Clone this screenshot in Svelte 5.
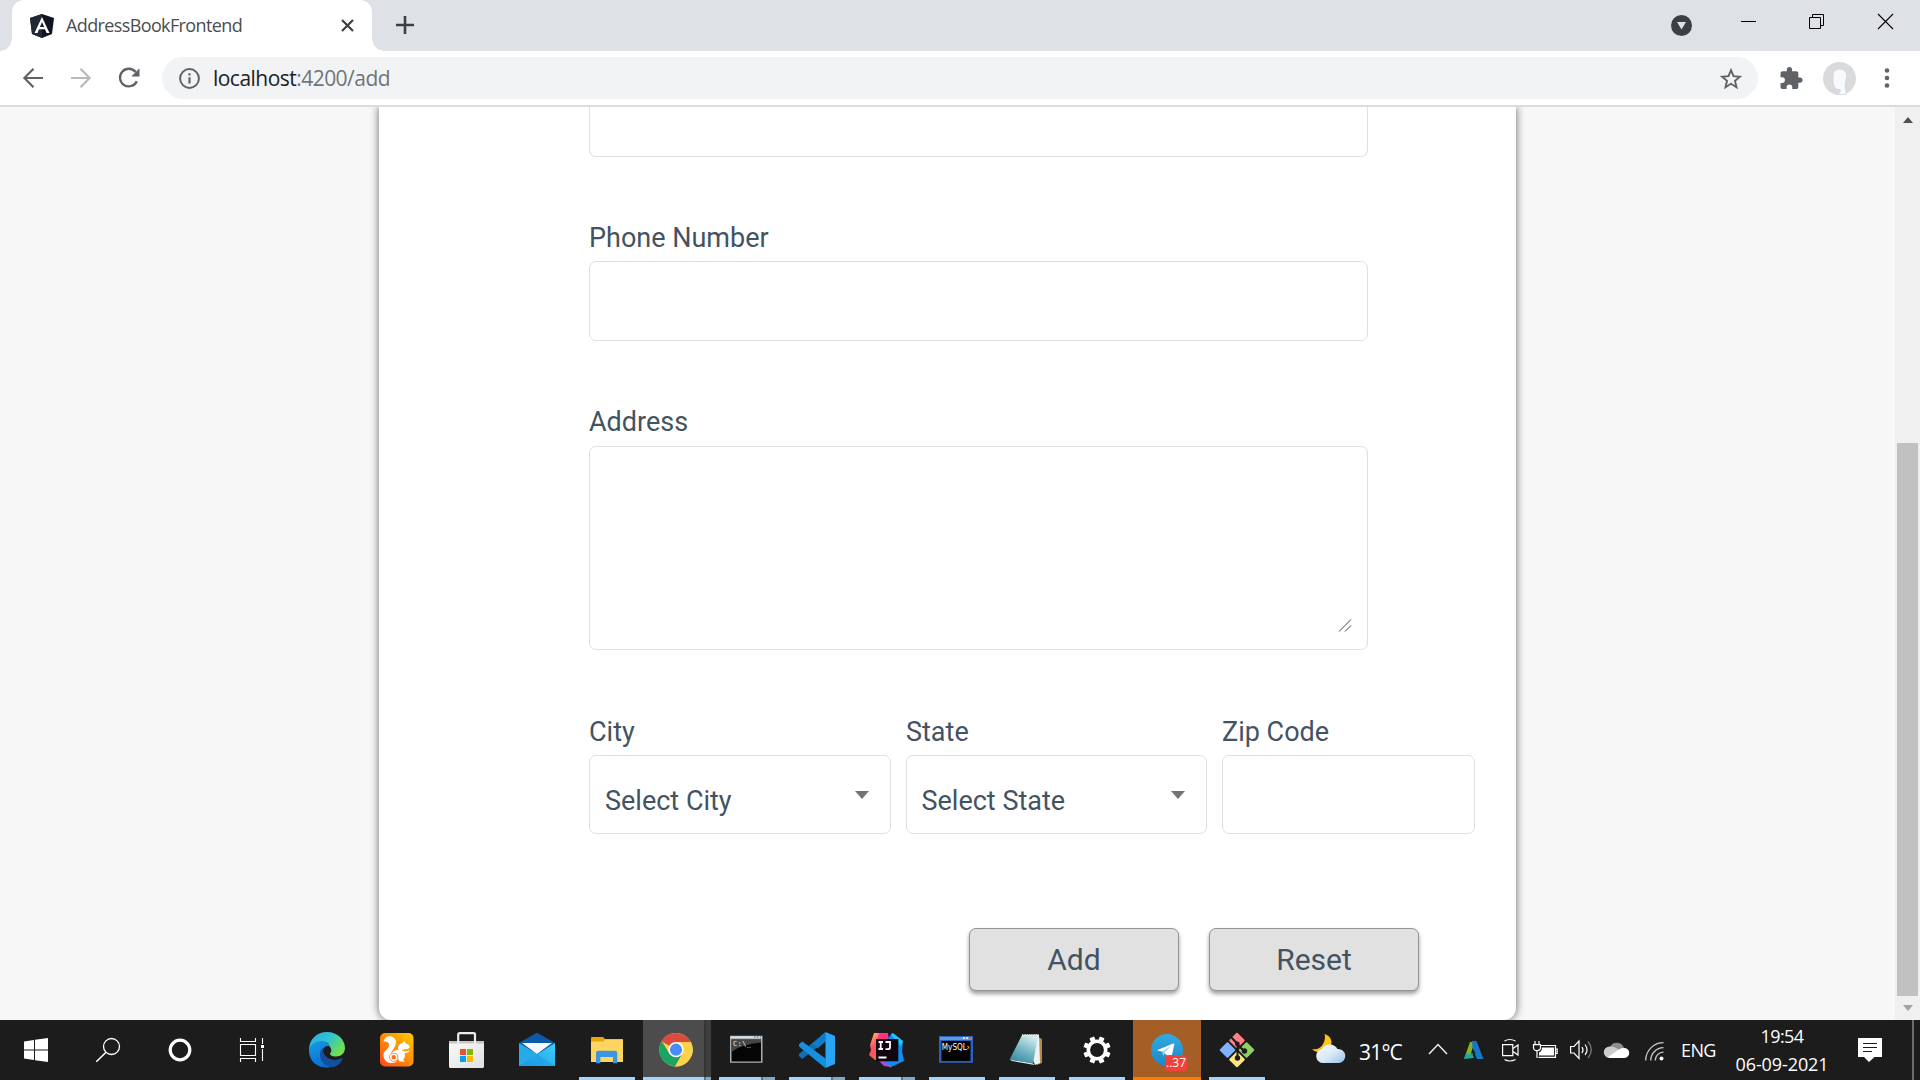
<script lang="ts">
  // Pinned and running taskbar programs; `wins` is the number of stacked windows (0 = not running).
  const apps = [
    { id: 'edge', wins: 0 },
    { id: 'uc', wins: 0 },
    { id: 'store', wins: 0 },
    { id: 'mail', wins: 0 },
    { id: 'files', wins: 1 },
    { id: 'chrome', wins: 2, state: 'active' },
    { id: 'cmd', wins: 2 },
    { id: 'vscode', wins: 2 },
    { id: 'idea', wins: 2 },
    { id: 'mysql', wins: 1 },
    { id: 'notepad', wins: 1 },
    { id: 'gear', wins: 1 },
    { id: 'telegram', wins: 1, state: 'alert' },
    { id: 'git', wins: 1 },
  ];
  const teeth = [0, 45, 90, 135, 180, 225, 270, 315];
</script>

{#snippet icon(id: string)}
  <svg class="app-icon" viewBox="0 0 36 36" width="36" height="36">
    {#if id === 'edge'}
      <defs>
        <linearGradient id="e1" x1="0" y1="0" x2="1" y2=".6"><stop offset="0" stop-color="#2aa9e8" /><stop offset=".5" stop-color="#2cc3d2" /><stop offset="1" stop-color="#74e04c" /></linearGradient>
        <linearGradient id="e2" x1="0" y1="0" x2=".5" y2="1"><stop offset="0" stop-color="#1a9be2" /><stop offset="1" stop-color="#0a6fd0" /></linearGradient>
      </defs>
      <path d="M0 18C0 7 8 0 18 0c11 0 18 8 18 16 0 5-4 8.500-9 8.500-4 0-6.500-1.500-6-3 2-2 2-6-2-8-6-3-15-1-19 4.500Z" fill="url(#e1)" />
      <path d="M0 18C1 12 7 9 12.500 9c5.500 0 8 2.500 8.500 5-4-1-8 2-8 8 0 8 6 12.500 11 12.500C16 38 0 34 0 18Z" fill="url(#e2)" />
      <path d="M13.500 16C9 21 10.500 31 19 34.500c6 2 11.500-1 14.500-7 .5-1-.5-1.500-1.500-1-9 4-18-1-18.500-10.500Z" fill="#124f9e" />
    {:else if id === 'uc'}
      <defs><linearGradient id="u1" x1="0" y1="1" x2="1" y2="0"><stop offset="0" stop-color="#ff4a17" /><stop offset=".5" stop-color="#ff8a0a" /><stop offset="1" stop-color="#ffd000" /></linearGradient></defs>
      <rect x="1" y="1" width="33.500" height="33.500" rx="5" fill="url(#u1)" />
      <path d="M4.500 9.500C5.500 4.500 11 3 14.500 5.500c4 3 2.500 8 0 11.500-1.500 2-2.500 3.500-2.500 5 2-3.500 5.500-5 9-4.500l3.500 1.500c2.500 1 4 0 6-.5-.5 2-3 2.500-5 2.800 1 2.200.5 5.200-1.500 6.700l2 1.500h-5.500l-1.500-3a5.500 5.500 0 0 1-5 4.500C8 31.500 4.500 28 4.500 23c0-4 4.500-5.500 5.500-9 .8-3-1.500-5-5.500-4.500Z" fill="#fff" />
      <path d="M19 16.500c0-3 1.500-4.500 4-5l2.500-2.500 1.200 2.500c2.500.5 4 2 4 4-1.200 1.500-3.200 1.700-5.200 1.700-2 1.300-5 1.300-6.500-.7Z" fill="#fff" />
      <circle cx="14.800" cy="25.300" r="4.500" fill="#ff6f13" /><circle cx="14.800" cy="25.300" r="3" fill="none" stroke="#fff" stroke-width="1.600" />
    {:else if id === 'store'}
      <defs><linearGradient id="s1" x1="0" y1="0" x2="1" y2="1"><stop offset="0" stop-color="#fafafa" /><stop offset="1" stop-color="#e0e0e0" /></linearGradient></defs>
      <path d="M0 9h35v26l-1 1H1l-1-1Z" fill="url(#s1)" /><path d="M0 9h35v2.500H0Z" fill="#c5c5c5" />
      <path d="M9.200 12V2.500Q9.200 1.200 10.700 1.200h13.600Q26 1.200 26 2.500V12" fill="none" stroke="#ececec" stroke-width="2.200" />
      <path d="M11 17h6v6h-6Z" fill="#f25022" /><path d="M18 17h6v6h-6Z" fill="#7fba00" /><path d="M11 24h6v6h-6Z" fill="#00a4ef" /><path d="M18 24h6v6h-6Z" fill="#ffb900" />
    {:else if id === 'mail'}
      <defs><linearGradient id="m1" x1="1" y1="0" x2="0" y2="1"><stop offset="0" stop-color="#3bd0fa" /><stop offset="1" stop-color="#1c9ce8" /></linearGradient></defs>
      <path d="M0 11 17 1.200q1-.7 2 0L36 11 18 23Z" fill="#0c59a8" />
      <path d="M0 11 18 22v12H0Z" fill="#28aae9" /><path d="M36 11v23H0Z" fill="url(#m1)" /><path d="M3 11h30L18 22Z" fill="#f6f8fc" /><path d="m18 22 18 12H0Z" fill="#1b96df" opacity=".45" />
    {:else if id === 'files'}
      <path d="M2 6q0-1 1-1h11l2 2h17q1 0 1 1v22H2Z" fill="#e8a40c" /><path d="M2 9.500h12l2-2h18V30H2Z" fill="#ffd560" />
      <path d="M7 31.300V21q0-2.300 2.300-2.300H26q2.300 0 2.300 2.300v10.300h-4.300V25H11.400v6.300Z" fill="#3a97df" />
    {:else if id === 'chrome'}
      <circle cx="17" cy="17.700" r="16.700" fill="#fcd24b" />
      <path d="M17 17.700 2.500 9.300A16.700 16.700 0 0 1 31.800 10H17Z" fill="#dc4b3e" />
      <path d="M2.700 9A16.700 16.700 0 0 0 16 34.400l7.500-12.800-13 .1Z" fill="#1da362" />
      <path d="M31.800 10A16.700 16.700 0 0 1 16 34.400l7.700-13L17 10Z" fill="#fcd24b" />
      <circle cx="17" cy="17.700" r="7.600" fill="#fff" /><circle cx="17" cy="17.700" r="6.100" fill="#4b8bf5" />
    {:else if id === 'cmd'}
      <path d="M1 3.700h32.500v27H1Z" fill="#a9b0b4" /><path d="M1.500 4.200h31.500v2H1.500Z" fill="#d7dcdf" /><path d="M2.500 7.500h29.500v22H2.500Z" fill="#050505" /><path d="M2.500 7.500H32v3Q12 12 2.500 20Z" fill="#464646" />
      <text class="cmd-text" x="4" y="14" textLength="18">C:\_</text><path d="M25 5h1.500M28 5h1.500M31 5h1" stroke="#456" />
    {:else if id === 'vscode'}
      <path d="m0 12.500 3-3L26.500 27v9L0 14.500Z" fill="#0b79c4" /><path d="M26.500 0v9L3 27l-3-3v-2Z" fill="#0e6fb5" /><path d="m26.500 0-13 12 5 4.500 8-7Z" fill="#0d7dcb" /><path d="M0 12.500 3.200 9.500l23.300 17V36L1 15Z" fill="#168fdd" /><path d="M26.500 0 36 4v28l-9.500 4Z" fill="#2aa5f4" />
    {:else if id === 'idea'}
      <defs><linearGradient id="i1" x1="0" y1="0" x2=".5" y2="1"><stop offset="0" stop-color="#ffcf40" /><stop offset=".4" stop-color="#ff4b6e" /><stop offset="1" stop-color="#f8801c" /></linearGradient></defs>
      <path d="M5 1h13l1 5 3 30-8-8H6l-6-5 2-5-1-5Z" fill="url(#i1)" /><path d="m10 1 9 0 1 8-12-1Z" fill="#ff3286" /><path d="M23 1l11 8-1 10 2 10-13 6-8-7 4-20Z" fill="#0d8df5" /><path d="m22 3 2-2 10 8-2 5Z" fill="#20c6f4" /><path d="m9 28 6 1 7 6-7-1Z" fill="#a84de0" />
      <path d="M7 7h22.300v22.300H7Z" fill="#100610" /><path d="M9.500 10h4.500M11.700 10v7M9.500 17H14M16.500 10h4.500v5.200q0 2-2 2h-2.500M9.500 25.500h8" fill="none" stroke="#fff" stroke-width="1.800" />
    {:else if id === 'mysql'}
      <path d="M0 4h34v26.700H0Z" fill="#2b61b8" /><path d="M1 5h32v3H1Z" fill="#5f9ade" /><path d="M24 5h2v2h-2ZM27 5h2v2h-2Z" fill="#d6e4f5" /><path d="M30 5h2v2h-2Z" fill="#e4563a" /><path d="M2.500 9h29v20h-29Z" fill="#030303" />
      <text class="sql-text" x="2.800" y="17.500" textLength="28" lengthAdjust="spacingAndGlyphs">MySQL›</text>
    {:else if id === 'notepad'}
      <defs><linearGradient id="n1" x1=".8" y1="0" x2=".3" y2="1"><stop offset="0" stop-color="#d5eef2" /><stop offset=".5" stop-color="#7ab9c6" /><stop offset="1" stop-color="#348b9f" /></linearGradient></defs>
      <path d="m29 5 4 2v24l-5 2Z" fill="#b58a4b" /><path d="m13 3 17-.5L31 31l-5 2Z" fill="#eef2f2" /><path d="M12.500 4h16.500L24 31.500.7 27.500Z" fill="url(#n1)" /><path d="m.7 27.500 23.300 4 1.500 1.500L3 29Z" fill="#dfeced" />
      <path d="M13 3.500h16" stroke="#d9dfe0" stroke-width="3" stroke-dasharray="1.300 1" />
    {:else if id === 'gear'}
      <g fill="#fff">{#each teeth as a}<rect x="15.500" y="4.300" width="5" height="6" rx=".7" transform="rotate({a + 22.5} 18 18)" />{/each}</g>
      <circle cx="18" cy="18" r="8.700" fill="none" stroke="#fff" stroke-width="3.600" />
    {:else if id === 'telegram'}
      <defs><linearGradient id="t1" x1="0" y1="0" x2="0" y2="1"><stop offset="0" stop-color="#34aae0" /><stop offset="1" stop-color="#1a88c6" /></linearGradient></defs>
      <circle cx="18" cy="18" r="16" fill="url(#t1)" /><path d="m7.800 18.200 16.500-6.700q1.300-.4 1 1L22.500 25q-.4 1-1.400.4L13 19.500Z" fill="#fff" /><path d="m13 19.500 9-5.500-7 7-.5 4Z" fill="#a9cde4" />
    {:else if id === 'git'}
      <g transform="rotate(45 18 18)">
        <rect x="5.500" y="5.500" width="11.500" height="11.500" rx="1" fill="#ff7f86" /><rect x="19" y="5.500" width="11.500" height="11.500" rx="1" fill="#8dd35f" />
        <rect x="19" y="19" width="11.500" height="11.500" rx="1" fill="#ffe680" /><rect x="5.500" y="19" width="11.500" height="11.500" rx="1" fill="#80b3ff" />
      </g>
      <g transform="rotate(45 18 18)"><path d="M5 5h25.500v25.500H5Z" fill="none" /></g>
      <path d="m12 5 6.500 7v14M18.500 12.500l7 7" fill="none" stroke="#1c1c1c" stroke-width="2" /><circle cx="18.300" cy="11.800" r="2.400" fill="#1c1c1c" /><circle cx="18.500" cy="26" r="2.700" fill="#1c1c1c" /><circle cx="25.500" cy="19" r="2.700" fill="#1c1c1c" />
    {/if}
  </svg>
{/snippet}

<div class="screen">
  <header class="tabs">
    <div class="tab">
      <svg width="24" height="24" viewBox="0 0 24 24"><path d="M12 0 24 4l-2 16-10 4-10-4L0 4Z" fill="#10151f" /><path d="M12 0v24L2 20 0 4Z" fill="#222936" /><path d="m12 3 7.500 16h-3l-1.500-3.700H9L7.500 19h-3Zm0 5-2.100 5h4.200Z" fill="#fff" fill-rule="evenodd" /></svg>
      <span class="tab-title">AddressBookFrontend</span>
      <svg class="tab-close" width="13" height="13" viewBox="0 0 13 13"><path d="m1 1 11 11M12 1 1 12" stroke="#3c4043" stroke-width="2.200" /></svg>
    </div>
    <svg class="plus" width="18" height="18" viewBox="0 0 18 18"><path d="M9 0v18M0 9h18" stroke="#3c4043" stroke-width="2.600" /></svg>
    <div class="window-controls">
      <svg width="21" height="21" viewBox="0 0 21 21"><circle cx="10.500" cy="10.500" r="10.500" fill="#3c4043" /><path d="M6 7h9l-4.500 7.500Z" fill="#dee1e6" /></svg>
      <svg class="ctl min" width="15" height="15" viewBox="0 0 15 15"><path d="M0 7.500h15" stroke="#000" /></svg>
      <svg class="ctl max" width="15" height="15" viewBox="0 0 15 15"><path d="M.5 3.500h11v11H.5ZM3.500 3.500V.5h11v11h-3" fill="none" stroke="#000" /></svg>
      <svg class="ctl shut" width="15" height="15" viewBox="0 0 15 15"><path d="m0 0 15 15M15 0 0 15" stroke="#000" stroke-width="1.100" /></svg>
    </div>
  </header>

  <div class="toolbar">
    <svg width="20" height="20" viewBox="0 0 20 20"><path d="M20 10H1.500M10.500.8 1.400 10l9.100 9.200" fill="none" stroke="#5f6368" stroke-width="2.200" /></svg>
    <svg class="fwd" width="20" height="20" viewBox="0 0 20 20"><path d="M0 10h18.500M9.500.8l9.100 9.200-9.100 9.200" fill="none" stroke="#bababd" stroke-width="2.200" /></svg>
    <svg class="reload" width="22" height="20" viewBox="0 0 22 20"><path d="M17.800 13.200A8.800 8.800 0 1 1 16.600 4" fill="none" stroke="#5f6368" stroke-width="2.300" /><path d="M20.500.3v8.200h-8.200Z" fill="#5f6368" /></svg>
    <div class="omnibox">
      <svg width="21" height="21" viewBox="0 0 21 21"><circle cx="10.500" cy="10.500" r="9.400" fill="none" stroke="#5f6368" stroke-width="2" /><path d="M10.500 9.200v6.200M10.500 5.200v2.300" stroke="#5f6368" stroke-width="2.200" /></svg>
      <span class="url"><b>localhost</b>:4200/add</span>
      <svg class="star" width="22" height="21" viewBox="0 0 22 21"><path d="m11 2.200 2.500 6 6.400.5-4.900 4.200 1.500 6.300-5.500-3.400-5.500 3.400L7 12.900 2.100 8.700l6.400-.5Z" fill="none" stroke="#5f6368" stroke-width="1.900" /></svg>
    </div>
    <svg class="puzzle" width="22" height="22" viewBox="1.500 1 21 21"><path d="M20.500 11H19V7c0-1.100-.9-2-2-2h-4V3.500a2.500 2.500 0 0 0-5 0V5H4c-1.100 0-2 .9-2 2v3.800h1.500a2.700 2.700 0 0 1 0 5.400H2V20c0 1.100.9 2 2 2h3.800v-1.500a2.700 2.700 0 0 1 5.400 0V22H17c1.100 0 2-.9 2-2v-4h1.500a2.500 2.500 0 0 0 0-5Z" fill="#5f6368" /></svg>
    <svg class="avatar" width="33" height="33" viewBox="0 0 33 33"><circle cx="16.500" cy="16.500" r="16.500" fill="#dadada" /><path d="M10 14c0-5 3-7 7-7s7 3 6.500 8c-.4 5-1.500 6-1.500 9l1.500 8q-5 1.500-10 0c3-1 4.500-2 3.500-4.500-6 .5-7-3.500-7-13.500Z" fill="#f7fafd" stroke="#c8d2dc" stroke-width=".7" /></svg>
    <svg width="6" height="20" viewBox="0 0 6 20"><g fill="#5f6368"><circle cx="3" cy="2.500" r="2.300" /><circle cx="3" cy="10" r="2.300" /><circle cx="3" cy="17.500" r="2.300" /></g></svg>
  </div>

  <main class="viewport">
    <form class="card">
      <div class="field cut"></div>
      <div class="group phone"><span class="label">Phone Number</span><div class="field"></div></div>
      <div class="group address">
        <span class="label">Address</span>
        <div class="field area"><svg width="12" height="13" viewBox="0 0 12 13"><path d="M0 12.500 12 .5M6 12.500l6-6" stroke="#444" stroke-width="1" /></svg></div>
      </div>
      <div class="row">
        <div class="group"><span class="label">City</span><div class="field select"><span>Select City</span><i class="caret"></i></div></div>
        <div class="group state"><span class="label">State</span><div class="field select"><span>Select State</span><i class="caret"></i></div></div>
        <div class="group zip"><span class="label">Zip Code</span><div class="field"></div></div>
      </div>
      <div class="actions"><button type="button">Add</button><button type="button">Reset</button></div>
    </form>
    <div class="scrollbar"><i class="up"></i><div class="thumb"></div><i class="down"></i></div>
  </main>

  <footer class="taskbar">
    <div class="sys"><svg width="24" height="24" viewBox="0 0 24 24"><path d="M0 3.400 10 2v9.500H0ZM11 1.800 24 0v11.500H11ZM0 12.500h10V22L0 20.600ZM11 12.500h13V24l-13-1.800Z" fill="#fff" /></svg></div>
    <div class="sys"><svg width="24" height="24" viewBox="0 0 24 24"><circle cx="15.500" cy="8.500" r="8" fill="none" stroke="#fff" stroke-width="1.300" /><path d="m10 14.300-9.700 9.500" stroke="#fff" stroke-width="1.600" /></svg></div>
    <div class="sys"><svg width="24" height="24" viewBox="0 0 24 24"><circle cx="12" cy="12" r="9.800" fill="none" stroke="#fff" stroke-width="3.200" /></svg></div>
    <div class="sys"><svg width="24" height="24" viewBox="0 0 24 24"><path d="M.5 0v3.500h15V0M.5 6.500h15v11H.5ZM.5 24v-3.500h15V24M22.500 0v6M22.500 11v12" fill="none" stroke="#fff" stroke-width="1.100" /><path d="M21 7h3v3h-3Z" fill="#fff" /></svg></div>
    <nav class="apps">
      {#each apps as app}
        <div class="app {app.state ?? ''}">
          {@render icon(app.id)}
          {#if app.id === 'telegram'}<span class="badge">..37</span>{/if}
          {#if app.wins}<div class="run"><i></i>{#if app.wins > 1}<i class="more"></i>{/if}</div>{/if}
        </div>
      {/each}
    </nav>
    <div class="tray">
      <svg class="weather" width="35" height="30" viewBox="0 0 35 30"><defs><linearGradient id="w1" x1="0" y1="0" x2="1" y2="1"><stop offset="0" stop-color="#f4f9fe" /><stop offset=".5" stop-color="#dcebf8" /><stop offset="1" stop-color="#93c0e8" /></linearGradient></defs><path d="M12.500 0c7 2 9 9 5 14-4 5-13 6-17.500 1 5 1 9-1 11-5 2-3.500 2.500-7 1.500-10Z" fill="#fcc419" /><path d="M10.500 29a7 7 0 0 1-.8-13.800A9 9 0 0 1 25.500 15 7 7 0 0 1 27 29Z" fill="url(#w1)" /></svg>
      <span class="temp">31°C</span>
      <svg class="chev" width="20" height="12" viewBox="0 0 20 12"><path d="m1 11 9-9.500 9 9.500" fill="none" stroke="#eee" stroke-width="1.500" /></svg>
      <svg class="autodesk" width="20" height="19" viewBox="0 0 20 19"><path d="M6 1h7l-4 12L0 18Z" fill="#85b526" /><path d="m0 18 2-5q3 1 6-1l2 5Z" fill="#19a7a1" /><path d="M8 0h4.500L19.500 18h-6.500L8.500 8Z" fill="#1677c4" /><path d="m8.500 7 3 5.500H7Z" fill="#1c1c1c" /></svg>
      <svg class="cam" width="17" height="24" viewBox="0 0 17 24"><path d="M.6 6.600h10.200v11H.6ZM11 10.500l5-3.500v10l-5-3.500M2.500 3q5-3 11 0M2.500 21.500q5 3 11 0" fill="none" stroke="#fff" stroke-width="1.200" /></svg>
      <svg class="bat" width="25" height="18" viewBox="0 0 25 18"><path d="M7 4.500h15.500v11.800H5.500M22.500 8h1.700v4.500h-1.700" fill="none" stroke="#fff" stroke-width="1.200" /><path d="M9 6.500h12v8H6v-3q3-1 3-5Z" fill="#fff" /><path d="M2 0v3.500M6 0v3.500M.5 3.600h7v3q0 3-3.500 3t-3.500-3ZM4 10v7" fill="none" stroke="#fff" stroke-width="1.200" /></svg>
      <svg class="spk" width="23" height="20" viewBox="0 0 23 20"><path d="M.6 6.500H4L9 1v17.500L4 13H.6Z" fill="none" stroke="#fff" stroke-width="1.200" /><path d="M12 7q2 3 0 6M15 4.500q4 5 0 10.500" fill="none" stroke="#fff" stroke-width="1.200" /><path d="M18 1.500q6.500 8 0 16.500" fill="none" stroke="#777" stroke-width="1.300" /></svg>
      <svg class="cloud" width="24" height="16" viewBox="0 0 24 16"><path d="M5 5a7.500 7.500 0 0 1 14 1l-5 7Z" fill="#8e8e8e" /><path d="M4.500 16a5.500 5.500 0 0 1 0-11.500Q10 4 14 8l-7 8Z" fill="#cbcbcb" /><path d="M3 15 14 7.500q2-2 5-1.500a5 5 0 0 1 .5 10H4.500Z" fill="#fff" /></svg>
      <svg class="wifi" width="19" height="19" viewBox="0 0 19 19"><path d="M.7 18.500A17.800 17.800 0 0 1 18.500.7M5.700 18.500A12.800 12.800 0 0 1 18.500 5.700M10.200 18.500a8.300 8.300 0 0 1 8.300-8.300" fill="none" stroke="#ccc" stroke-width="1.300" /><circle cx="16.500" cy="16.500" r="2" fill="#fff" /></svg>
      <span class="lang">ENG</span>
      <div class="clock"><span class="time">19:54</span><span class="date">06-09-2021</span></div>
      <svg class="note" width="24" height="24" viewBox="0 0 24 24"><path d="M0 0h24v19h-7.500L11 24l-5-5H0Z" fill="#fff" /><path d="M5 5.500h14M5 9.500h14M5 13.500h9" stroke="#1c1c1c" stroke-width="1.200" /></svg>
      <i class="desk"></i>
    </div>
  </footer>
</div>

<style>
  :global(body) { margin: 0; overflow: hidden; }
  * { box-sizing: border-box; }
  svg { display: block; flex: none; overflow: visible; }
  .screen { width: 1920px; height: 1080px; display: flex; flex-direction: column; overflow: hidden; background: #fff; font-family: "Open Sans", "Noto Sans", sans-serif; white-space: nowrap; }

  .tabs { height: 51px; flex: none; background: #dee1e6; display: flex; padding-left: 12px; }
  .tab { position: relative; width: 360px; height: 51px; background: #fff; border-radius: 12px 12px 0 0; display: flex; align-items: center; padding: 0 18px; }
  .tab::before, .tab::after { content: ""; position: absolute; bottom: 0; width: 12px; height: 12px; }
  .tab::before { left: -12px; background: radial-gradient(circle at 0 0, #dee1e6 11.5px, #fff 12px); }
  .tab::after { right: -12px; background: radial-gradient(circle at 100% 0, #dee1e6 11.5px, #fff 12px); }
  .tab-title { margin: -1px 0 0 12px; font-size: 18px; color: #4a4d51; letter-spacing: -.62px; line-height: 24px; }
  .tab-close { margin-left: auto; }
  .plus { margin: 16px 0 0 24px; }
  .window-controls { margin-left: auto; display: flex; padding-top: 15px; }
  .ctl { margin-top: -1px; }
  .min { margin-left: 49px; }
  .max { margin-left: 53px; }
  .shut { margin: -1px 27px 0 54px; }

  .toolbar { height: 56px; flex: none; border-bottom: 2px solid #dadce0; display: flex; align-items: center; padding-left: 23px; }
  .fwd { margin-left: 28px; }
  .reload { margin-left: 28px; }
  .omnibox { width: 1596px; height: 42px; margin-left: 21px; border-radius: 21px; background: #f1f3f4; display: flex; align-items: center; padding: 0 16px 0 17px; }
  .url { margin-left: 13px; font-size: 21px; line-height: 28px; color: #70757a; letter-spacing: -.53px; }
  .url b { font-weight: 400; color: #202124; }
  .star { margin-left: auto; }
  .puzzle { margin-left: 22px; }
  .avatar { margin: 0 28px 0 21px; }

  .viewport { height: 913px; flex: none; background: #f7f7f7; display: flex; padding-left: 379px; overflow: hidden; }
  .card { width: 1137px; height: 913px; background: #fff; border-radius: 0 0 12px 12px; box-shadow: 0 0 9px rgba(0, 0, 0, .6); padding-left: 210px; font-family: Roboto, sans-serif; color: #445362; }
  .field { width: 779px; height: 80px; border: 1px solid #dfdfdf; border-radius: 7px; background: #fff; }
  .cut { height: 50px; border-top: 0; border-radius: 0 0 7px 7px; }
  .group { display: flex; flex-direction: column; }
  .label { font-size: 27px; line-height: 32px; height: 39px; }
  .phone { margin-top: 65px; }
  .address { margin-top: 65px; }
  .address .label { height: 40px; }
  .area { height: 204px; display: flex; align-items: flex-end; justify-content: flex-end; padding: 0 16px 17px; }
  .row { display: flex; gap: 15px; margin-top: 66px; }
  .row .field { width: 302px; height: 79px; }
  .row .state .field { width: 301px; }
  .row .zip .field { width: 253px; }
  .select { display: flex; padding: 29px 21px 0 15px; justify-content: space-between; font-size: 27px; line-height: 32px; }
  .state .select { padding-left: 14.500px; }
  .caret { border: 7.500px solid transparent; border-top: 8px solid #757575; border-bottom: 0; height: 0; margin-top: 6px; }
  .actions { display: flex; gap: 30px; margin: 94px 0 0 380px; }
  button { width: 210px; height: 63px; padding: 0; border: 1px solid #949494; border-radius: 7px; background: #e1e1e1; box-shadow: 0 3px 4px rgba(0, 0, 0, .38); font: 30px Roboto, sans-serif; color: #445362; }

  .scrollbar { width: 25px; margin-left: auto; background: #f0f0f0; display: flex; flex-direction: column; align-items: center; padding: 10px 0 9px; }
  .up, .down { border: 5.500px solid transparent; height: 0; width: 0; }
  .up { border-top: 0; border-bottom: 6px solid #505050; }
  .down { border-bottom: 0; border-top: 6px solid #a3a3a3; }
  .thumb { width: 21px; height: 553px; background: #c1c1c1; margin: 320px 0 9px; }

  .taskbar { height: 60px; flex: none; background: #1c1c1c; display: flex; color: #fff; }
  .sys { width: 72px; display: flex; align-items: center; justify-content: center; }
  .apps { display: flex; margin-left: 4px; }
  .app { position: relative; width: 70px; height: 60px; display: flex; align-items: center; justify-content: center; }
  .active { background: linear-gradient(90deg, transparent 1px, #4c4c4c 1px 62px, #353535 62px 64px, #3e3e3e 64px 69px, transparent 69px); }
  .alert { background: linear-gradient(90deg, transparent 1px, #a65e27 1px 69px, transparent 69px); }
  .run { position: absolute; left: 7px; right: 7px; bottom: 0; height: 3px; display: flex; background: #5d7486; }
  .run i { flex: 1; background: #a5d3f8; }
  .run .more { flex: none; width: 12px; margin-left: 2px; background: #84a7c2; }
  .active .run, .alert .run { left: 1px; right: 1px; }
  .active .run .more { width: 5px; }
  .alert .run i { background: #ff7a00; }
  .badge { position: absolute; left: 33px; top: 35px; width: 22px; height: 16px; border-radius: 4px; background: #f2403a; font-size: 12px; line-height: 16px; text-align: center; }
  .cmd-text { font: 7px "DejaVu Sans Mono", monospace; fill: #e8e8e8; }
  .sql-text { font: 8px "DejaVu Sans", sans-serif; fill: #fff; }

  .tray { display: flex; align-items: center; margin-left: 40px; }
  .weather { margin-top: -2px; }
  .temp { width: 45px; margin-left: 12px; font-size: 21px; line-height: 30px; letter-spacing: -.8px; margin-top: 4px; }
  .chev { margin: -2px 0 0 24px; }
  .autodesk { margin-left: 16px; }
  .cam { margin-left: 18px; }
  .bat { margin-left: 14px; }
  .spk { margin-left: 12px; }
  .cloud { margin-left: 12px; }
  .wifi { margin: 2px 0 0 16px; }
  .lang { width: 34px; margin: 0 0 0 17px; font-size: 18px; letter-spacing: -.6px; }
  .clock { width: 94px; margin-left: 20px; display: flex; flex-direction: column; align-items: center; font-size: 18px; line-height: 28px; letter-spacing: -.1px; }
  .time { letter-spacing: -.6px; }
  .note { margin-left: 29px; }
  .desk { width: 2px; height: 60px; margin-left: 30px; background: #6b6b6b; }
</style>
